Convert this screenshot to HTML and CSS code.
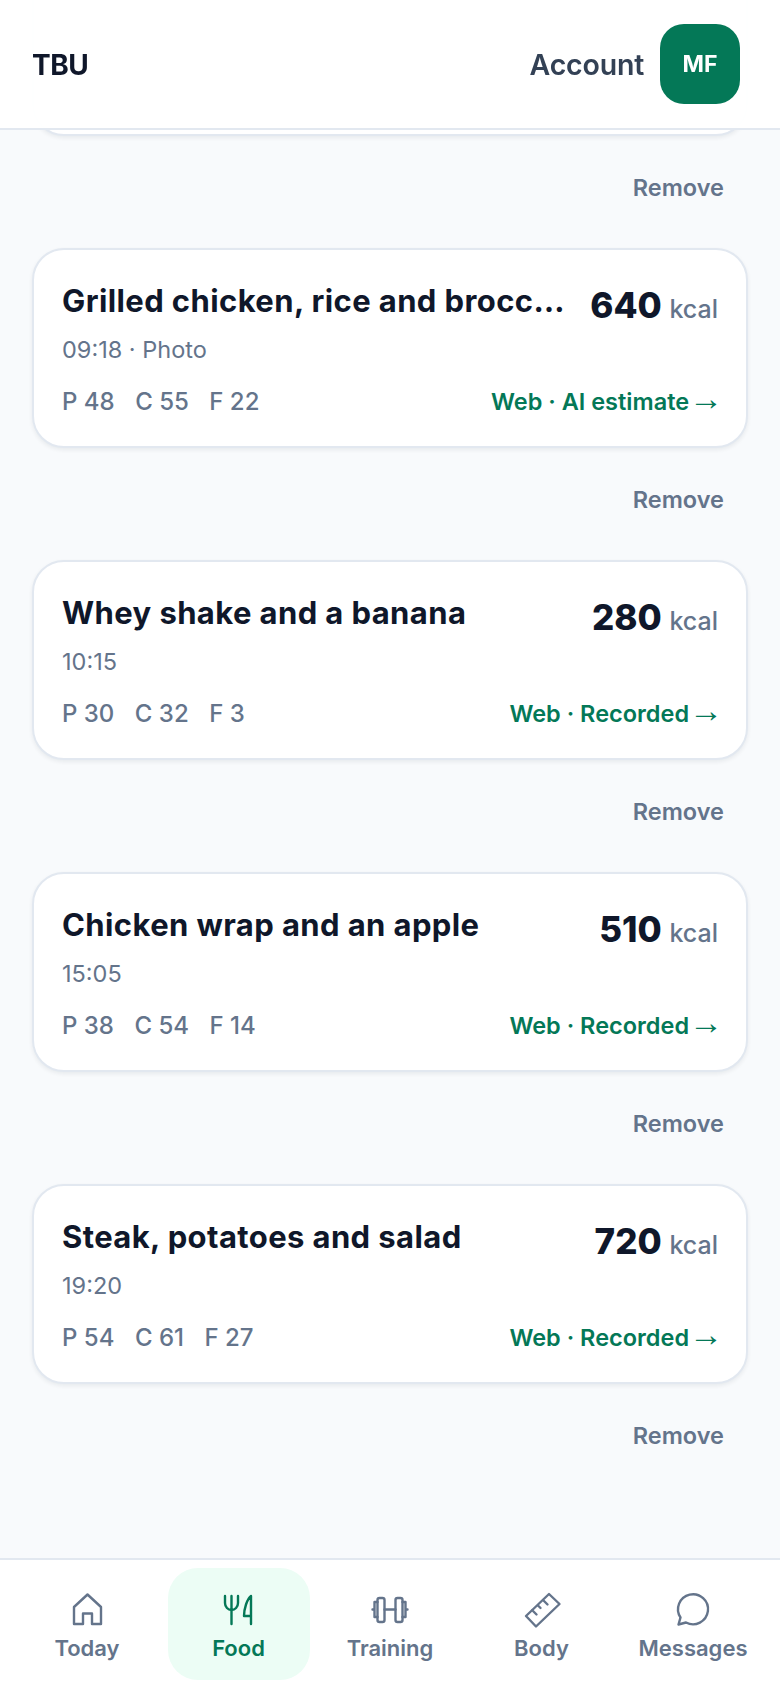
FILE: index.html
```html
<!DOCTYPE html>
<html lang="en">
<head>
  <meta charset="UTF-8" />
  <meta name="viewport" content="width=device-width, initial-scale=1.0"/>
  <title>TBU Food</title>
  <link rel="stylesheet" href="styles.css">
</head>
<body>
  <div class="app">
    <header class="topbar">
      <div class="brand">TBU</div>
      <div class="account">
        <span class="account-label">Account</span>
        <div class="avatar">MF</div>
      </div>
    </header>

    <main class="feed">
      <div class="card card-tail"></div>
      <div class="remove-row"><button class="remove">Remove</button></div>

      <div class="card">
        <div class="card-top">
          <h3 class="meal-title">Grilled chicken, rice and broccoli</h3>
          <div class="kcal"><strong>640</strong> <span>kcal</span></div>
        </div>
        <div class="meal-time">09:18 · Photo</div>
        <div class="card-bottom">
          <div class="macros"><span>P 48</span><span>C 55</span><span>F 22</span></div>
          <a class="source">Web · AI estimate<span class="arrow">→</span></a>
        </div>
      </div>
      <div class="remove-row"><button class="remove">Remove</button></div>

      <div class="card">
        <div class="card-top">
          <h3 class="meal-title">Whey shake and a banana</h3>
          <div class="kcal"><strong>280</strong> <span>kcal</span></div>
        </div>
        <div class="meal-time">10:15</div>
        <div class="card-bottom">
          <div class="macros"><span>P 30</span><span>C 32</span><span>F 3</span></div>
          <a class="source">Web · Recorded<span class="arrow">→</span></a>
        </div>
      </div>
      <div class="remove-row"><button class="remove">Remove</button></div>

      <div class="card">
        <div class="card-top">
          <h3 class="meal-title">Chicken wrap and an apple</h3>
          <div class="kcal"><strong>510</strong> <span>kcal</span></div>
        </div>
        <div class="meal-time">15:05</div>
        <div class="card-bottom">
          <div class="macros"><span>P 38</span><span>C 54</span><span>F 14</span></div>
          <a class="source">Web · Recorded<span class="arrow">→</span></a>
        </div>
      </div>
      <div class="remove-row"><button class="remove">Remove</button></div>

      <div class="card">
        <div class="card-top">
          <h3 class="meal-title">Steak, potatoes and salad</h3>
          <div class="kcal"><strong>720</strong> <span>kcal</span></div>
        </div>
        <div class="meal-time">19:20</div>
        <div class="card-bottom">
          <div class="macros"><span>P 54</span><span>C 61</span><span>F 27</span></div>
          <a class="source">Web · Recorded<span class="arrow">→</span></a>
        </div>
      </div>
      <div class="remove-row"><button class="remove">Remove</button></div>
    </main>

    <nav class="tabs">
      <a class="tab">
        <svg class="tab-icon" viewBox="0 0 36 36"><path d="M5 33V16L18.500 3.500 32 16V33H23V22.500H14V33Z"/></svg>
        <span>Today</span>
      </a>
      <a class="tab active">
        <svg class="tab-icon" viewBox="0 0 36 36"><path d="M4 5V12C4 16 7 19 10.500 19S17 16 17 12V5M10.500 5V33M30 33V5C26 8 23 18 23 25H30"/></svg>
        <span>Food</span>
      </a>
      <a class="tab">
        <svg class="tab-icon" viewBox="0 0 36 36"><rect x="5.500" y="7" width="7" height="24" rx="2"/><rect x="23.500" y="7" width="7" height="24" rx="2"/><path d="M5.500 11H2.500V26H5.500M30.500 11H33.500V26H30.500M12.500 18.500H23.500M2.500 18.500H.5M33.500 18.500H35.500"/></svg>
        <span>Training</span>
      </a>
      <a class="tab">
        <svg class="tab-icon" viewBox="0 0 36 36"><path d="M25 3 35.500 13 12 35.500 2 25ZM8 19l4.500 4.500M13.500 14l3 3M19 9l4.500 4.500"/></svg>
        <span>Body</span>
      </a>
      <a class="tab">
        <svg class="tab-icon" viewBox="0 0 36 36"><path d="M3.500 33.500 5.500 26.500A15 15 0 1 1 11 31.500Z"/></svg>
        <span>Messages</span>
      </a>
    </nav>
  </div>
</body>
</html>
```

FILE: styles.css
```css
* { margin: 0; padding: 0; box-sizing: border-box; font-family: 'Inter', 'Liberation Sans', sans-serif; }
body {
  background: #f8fafc;
  color: #0f172a;
}
.app {
  height: 100vh;
  display: flex;
  flex-direction: column;
  overflow: hidden;
}

/* top bar sits over the scrolled list */
.topbar {
  position: fixed;
  top: 0;
  left: 0;
  right: 0;
  z-index: 2;
  height: 130px;
  padding: 0 40px 0 32px;
  display: flex;
  align-items: center;
  justify-content: space-between;
  background: rgba(255,255,255,0.97);
  border-bottom: 2px solid #e2e8f0;
}
.brand {
  padding-top: 1px;
  font-size: 28px;
  font-weight: 700;
  letter-spacing: -0.5px;
}
.account {
  display: flex;
  align-items: center;
  gap: 16px;
}
.account-label {
  font-size: 28.500px;
  font-weight: 600;
  letter-spacing: -0.2px;
  color: #334155;
}
.avatar {
  width: 80px;
  height: 80px;
  border-radius: 24px;
  background: #047857;
  color: #fff;
  font-size: 23px;
  font-weight: 700;
  display: flex;
  align-items: center;
  justify-content: center;
}

.feed {
  flex: 1;
  min-height: 0;
  overflow: hidden;
  padding: 0 32px;
}
.card {
  height: 200px;
  padding: 31px 28px 0;
  background: #fff;
  border: 2px solid #e2e8f0;
  border-radius: 32px;
  box-shadow: 0 2px 4px rgba(15,23,42,0.07);
}
.card-tail { margin-top: -64px; }
.card-top {
  height: 40px;
  display: flex;
  align-items: flex-start;
  justify-content: space-between;
  gap: 22px;
}
.meal-title {
  flex: 1;
  min-width: 0;
  font-size: 31px;
  line-height: 40px;
  font-weight: 700;
  letter-spacing: 0.4px;
  white-space: nowrap;
  overflow: hidden;
  text-overflow: ellipsis;
}
.kcal {
  flex: none;
  padding-top: 2px;
  line-height: 44px;
  color: #64748b;
  font-size: 25px;
  font-weight: 500;
}
.kcal strong {
  margin-right: 1px;
  font-size: 35px;
  font-weight: 800;
  color: #0f172a;
}
.meal-time {
  margin-top: 13px;
  font-size: 23.500px;
  line-height: 32px;
  color: #64748b;
}
.card-bottom {
  margin-top: 20px;
  display: flex;
  align-items: center;
  justify-content: space-between;
}
.macros {
  display: flex;
  gap: 20.500px;
  font-size: 24px;
  line-height: 32px;
  font-weight: 500;
  color: #64748b;
}
.source {
  flex: none;
  white-space: nowrap;
  font-size: 23.500px;
  line-height: 32px;
  font-weight: 600;
  color: #047857;
}
.arrow {
  margin-right: -0.15em;
  font-family: 'Liberation Sans', sans-serif;
  font-size: 34px;
  line-height: 0;
  font-weight: 400;
}
.remove-row {
  height: 112px;
  padding: 36px 24px 0 0;
  display: flex;
  justify-content: flex-end;
  align-items: flex-start;
}
.remove {
  background: none;
  border: none;
  font-size: 23.500px;
  line-height: 32px;
  font-weight: 600;
  color: #64748b;
  cursor: pointer;
}

.tabs {
  flex: none;
  height: 130px;
  padding: 8px 16px;
  display: grid;
  grid-template-columns: repeat(5, 1fr);
  gap: 9.500px;
  background: #fff;
  border-top: 2px solid #e2e8f0;
}
.tab {
  height: 112px;
  padding-top: 23px;
  display: flex;
  flex-direction: column;
  align-items: center;
  gap: 7px;
  border-radius: 30px;
  font-size: 22px;
  line-height: 28px;
  font-weight: 600;
  color: #64748b;
}
.tab.active {
  background: #ecfdf5;
  color: #047857;
}
.tab-icon {
  width: 36px;
  height: 36px;
  flex: none;
  overflow: visible;
  fill: none;
  stroke: currentColor;
  stroke-width: 2.400;
  stroke-linecap: round;
  stroke-linejoin: round;
}
```
